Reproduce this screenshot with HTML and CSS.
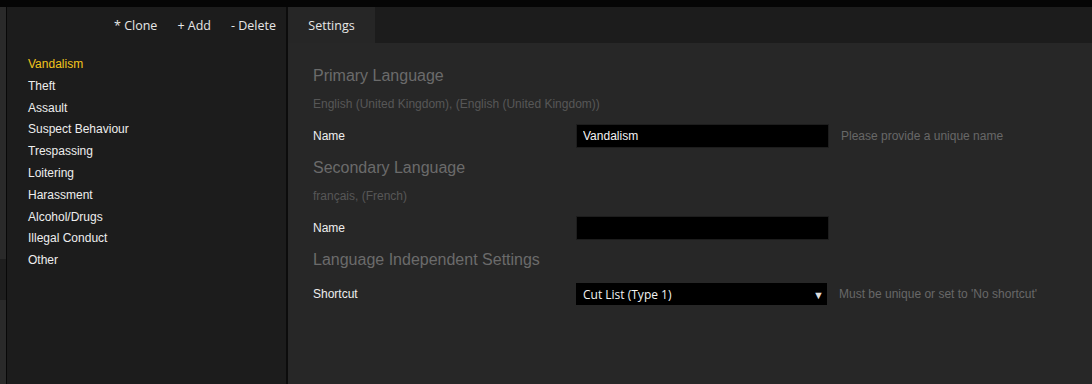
FILE: index.html
```html
<!DOCTYPE html>
<html lang="en">
<head>
  <meta charset="UTF-8" />
  <title>Categories - Settings</title>
  <link rel="stylesheet" href="styles.css">
</head>
<body>

  <div class="topbar"></div>

  <div class="app">
    <!-- Collapsed outer strip -->
    <div class="strip">
      <div class="strip-patch"></div>
    </div>

    <!-- Category list -->
    <div class="list-panel">
      <div class="toolbar">
        <a class="tool">* Clone</a>
        <a class="tool">+ Add</a>
        <a class="tool">- Delete</a>
      </div>
      <ul class="cat-list">
        <li class="active">Vandalism</li>
        <li>Theft</li>
        <li>Assault</li>
        <li>Suspect Behaviour</li>
        <li>Trespassing</li>
        <li>Loitering</li>
        <li>Harassment</li>
        <li>Alcohol/Drugs</li>
        <li>Illegal Conduct</li>
        <li>Other</li>
      </ul>
    </div>

    <!-- Settings -->
    <div class="detail-panel">
      <div class="tabs">
        <div class="tab active">Settings</div>
      </div>
      <div class="form">
        <h2 class="section">Primary Language</h2>
        <div class="lang">English (United Kingdom), (English (United Kingdom))</div>
        <div class="row">
          <label class="label">Name</label>
          <input class="field" type="text" value="Vandalism">
          <span class="hint">Please provide a unique name</span>
        </div>

        <h2 class="section">Secondary Language</h2>
        <div class="lang">français, (French)</div>
        <div class="row">
          <label class="label">Name</label>
          <input class="field" type="text" value="">
        </div>

        <h2 class="section">Language Independent Settings</h2>
        <div class="row row-select">
          <label class="label">Shortcut</label>
          <div class="select">
            <span>Cut List (Type 1)</span>
            <span class="caret">▼</span>
          </div>
          <span class="hint">Must be unique or set to 'No shortcut'</span>
        </div>
      </div>
    </div>
  </div>

</body>
</html>
```

FILE: styles.css
```css
html, body {
  margin: 0;
  padding: 0;
  height: 100%;
  background: #272727;
  font-family: 'Liberation Sans', Arial, sans-serif;
  font-size: 12px;
  color: #eee;
  overflow: hidden;
}

.topbar {
  height: 7px;
  background: #050505;
}

.app {
  display: flex;
  height: 377px;
}

/* Outer strip */
.strip {
  width: 6px;
  background: #2a2a2a;
  border-right: 1px solid #080808;
  padding-top: 252px;
}

.strip-patch {
  height: 41px;
  background: #1e1e1e;
}

/* Left list */
.list-panel {
  width: 279px;
  background: #1c1c1c;
  border-right: 2px solid #0c0c0c;
}

.toolbar {
  height: 36px;
  display: flex;
  justify-content: flex-end;
  align-items: center;
  gap: 20px;
  padding-right: 10px;
  font-family: 'Open Sans', 'Noto Sans', sans-serif;
  font-size: 12.5px;
}

.tool {
  color: #e6e6e6;
  cursor: pointer;
}

.cat-list {
  list-style: none;
  margin: 0;
  padding: 11px 0 0 21px;
}

.cat-list li {
  line-height: 21.8px;
  color: #eee;
}

.cat-list li.active {
  color: #f2c51c;
}

/* Right side */
.detail-panel {
  flex: 1;
  background: #272727;
}

.tabs {
  height: 36px;
  display: flex;
  background: #1c1c1c;
}

.tab {
  width: 87px;
  display: flex;
  align-items: center;
  justify-content: center;
  font-family: 'Open Sans', 'Noto Sans', sans-serif;
  font-size: 12.5px;
  color: #e6e6e6;
}

.tab.active {
  background: #262626;
}

.form {
  padding: 21px 0 0 25px;
}

.section {
  margin: 0;
  height: 24px;
  line-height: 24px;
  font-size: 16px;
  font-weight: normal;
  color: #6b6b6b;
}

.lang {
  height: 32px;
  line-height: 32px;
  font-size: 12px;
  color: #575757;
}

.row {
  display: flex;
  align-items: center;
  height: 32px;
  margin-bottom: 4px;
}

.row-select {
  margin-top: 6px;
}

.label {
  width: 263px;
  color: #eee;
}

.field {
  box-sizing: border-box;
  width: 253px;
  height: 24px;
  margin: 0;
  padding: 0 6px;
  background: #000;
  border: 1px solid #1d1d1d;
  color: #f2f2f2;
  font-family: 'Liberation Sans', Arial, sans-serif;
  font-size: 12px;
  outline: none;
}

.select {
  box-sizing: border-box;
  width: 251px;
  height: 22px;
  display: flex;
  align-items: center;
  justify-content: space-between;
  padding: 0 3px 0 7px;
  background: #000;
  color: #f2f2f2;
  font-family: 'Open Sans', 'Noto Sans', sans-serif;
  font-size: 12px;
}

.caret {
  font-size: 11px;
  color: #ddd;
}

.hint {
  margin-left: 12px;
  color: #686868;
}
```
